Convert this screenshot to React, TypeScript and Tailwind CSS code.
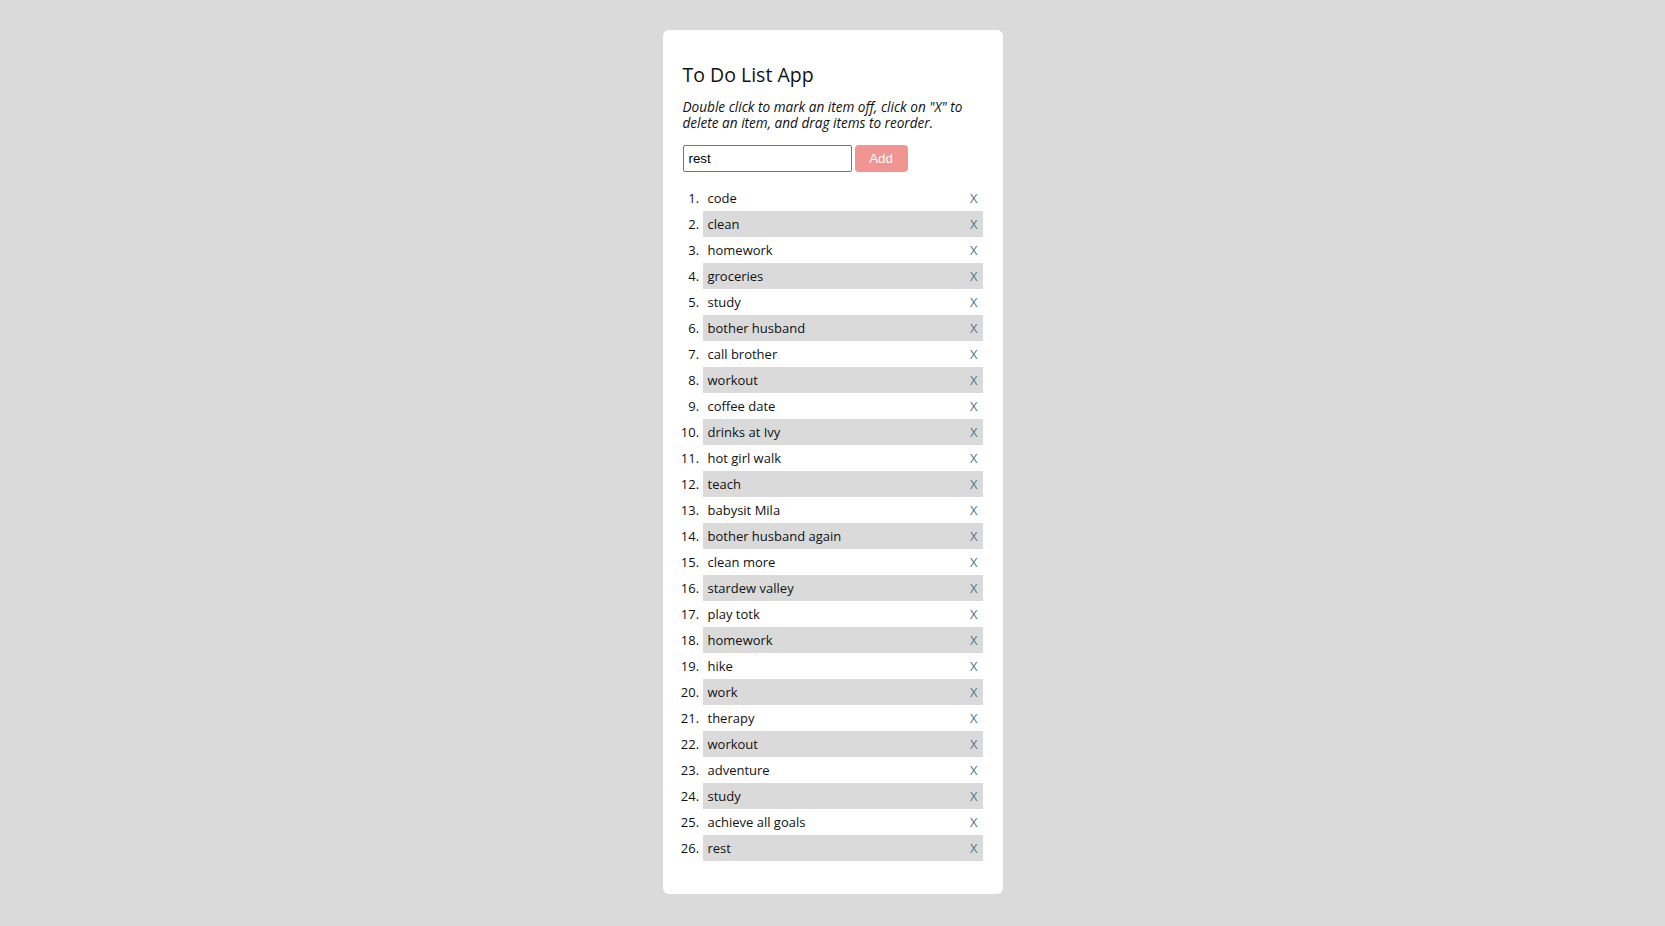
import React, { useState } from 'react';

const initialItems = [
  'code',
  'clean',
  'homework',
  'groceries',
  'study',
  'bother husband',
  'call brother',
  'workout',
  'coffee date',
  'drinks at Ivy',
  'hot girl walk',
  'teach',
  'babysit Mila',
  'bother husband again',
  'clean more',
  'stardew valley',
  'play totk',
  'homework',
  'hike',
  'work',
  'therapy',
  'workout',
  'adventure',
  'study',
  'achieve all goals',
  'rest',
];

const App: React.FC = () => {
  const [items, setItems] = useState<string[]>(initialItems);
  const [text, setText] = useState('rest');

  const addItem = () => {
    if (!text.trim()) return;
    setItems(prev => [...prev, text]);
  };

  const removeItem = (idx: number) => {
    setItems(prev => prev.filter((_, i) => i !== idx));
  };

  return (
    <div className="min-h-screen bg-[#dadada] pt-[30px] pb-[33px] font-['Open_Sans',sans-serif] text-[#111]">
      <div className="mx-auto w-[340px] rounded-[6px] bg-white px-[20px] pt-[31px] pb-[33px]">
        <h1 className="text-[19.5px] leading-[28px]">To Do List App</h1>

        <p className="mt-[10px] text-[13.6px] italic leading-[16px]">
          Double click to mark an item off, click on "X" to delete an item, and drag items to reorder.
        </p>

        {/* Input Area */}
        <div className="mt-[14px] flex items-center gap-[3px]">
          <input
            value={text}
            onChange={(e) => setText(e.target.value)}
            className="h-[27px] w-[169px] rounded-[2px] border border-[#767676] px-[5px] font-['Liberation_Sans',Arial,sans-serif] text-[13.33px] text-black outline-none"
          />
          <button
            onClick={addItem}
            className="h-[27px] w-[53px] rounded-[4px] bg-[#f19592] font-['Liberation_Sans',Arial,sans-serif] text-[13.33px] text-white"
          >
            Add
          </button>
        </div>

        {/* List */}
        <ol className="mt-[13px] list-decimal pl-[20px] text-[13px]">
          {items.map((item, idx) => (
            <li
              key={idx}
              className={`h-[26px] pl-[5px] pr-[5px] leading-[26px] ${idx % 2 === 1 ? 'bg-[#dadada]' : ''}`}
            >
              <div className="flex items-center justify-between">
                <span>{item}</span>
                <button onClick={() => removeItem(idx)} className="text-[13px] text-[#4a7b8c]">
                  X
                </button>
              </div>
            </li>
          ))}
        </ol>
      </div>
    </div>
  );
};

export default App;
